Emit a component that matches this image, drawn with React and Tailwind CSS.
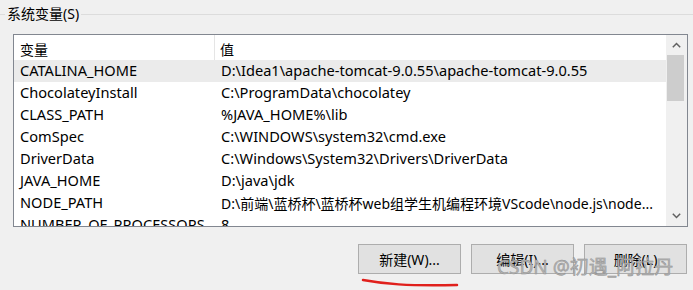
import React from "react";

const rows = [
  ["CATALINA_HOME", "D:\\Idea1\\apache-tomcat-9.0.55\\apache-tomcat-9.0.55", true],
  ["ChocolateyInstall", "C:\\ProgramData\\chocolatey"],
  ["CLASS_PATH", "%JAVA_HOME%\\lib"],
  ["ComSpec", "C:\\WINDOWS\\system32\\cmd.exe"],
  ["DriverData", "C:\\Windows\\System32\\Drivers\\DriverData"],
  ["JAVA_HOME", "D:\\java\\jdk"],
  ["NODE_PATH", "D:\\前端\\蓝桥杯\\蓝桥杯web组学生机编程环境VScode\\node.js\\node...", false, true],
  ["NUMBER_OF_PROCESSORS", "8"],
];

function Btn({ children }) {
  return (
    <div className="w-[103px] h-[30px] border border-[#adadad] bg-[#e1e1e1] flex items-center justify-center text-[14px] text-black">
      {children}
    </div>
  );
}

export default function App() {
  return (
    <div className="relative w-[693px] h-[290px] bg-[#f0f0f0] overflow-hidden text-black font-['Noto_Sans','Noto_Sans_CJK_SC',sans-serif]">
      {/* group title */}
      <div className="flex items-center h-[28px]">
        <div className="w-[5px] h-px bg-[#dcdcdc]" />
        <div className="px-[2px] text-[14px] leading-[28px]">系统变量(S)</div>
        <div className="flex-1 h-px bg-[#dcdcdc]" />
      </div>

      {/* list box */}
      <div className="ml-[13px] mt-[6px] w-[675px] h-[193px] border border-[#828790] bg-white flex overflow-hidden">
        <div className="flex-1 overflow-hidden">
          <div className="flex h-[25px] items-center text-[14px]">
            <div className="w-[201px] pl-[6px] pt-[3px] border-r border-[#e5e5e5] h-full flex items-center">变量</div>
            <div className="pl-[5px] pt-[3px]">值</div>
          </div>
          {rows.map(([k, v, sel, narrow]) => (
            <div
              key={k}
              className={`flex h-[22px] items-center text-[14.6px] whitespace-nowrap ${sel ? "bg-[#ebebeb]" : ""}`}
            >
              <div className="w-[202px] pl-[6px] shrink-0">{k}</div>
              <div className={narrow ? "pl-[5px] text-[14px]" : "pl-[5px]"}>{v}</div>
            </div>
          ))}
        </div>
        <div className="w-[21px] bg-[#f0f0f0] flex flex-col items-stretch">
          <div className="h-[20px] flex items-center justify-center">
            <svg width="9" height="6" viewBox="0 0 9 6">
              <path d="M0.8 5.2 L4.5 1.5 L8.2 5.2" stroke="#606060" strokeWidth="1.5" fill="none" />
            </svg>
          </div>
          <div className="ml-[1px] mr-[3px] h-[46px] bg-[#cdcdcd]" />
          <div className="flex-1" />
          <div className="h-[20px] flex items-center justify-center">
            <svg width="9" height="6" viewBox="0 0 9 6">
              <path d="M0.8 0.8 L4.5 4.5 L8.2 0.8" stroke="#606060" strokeWidth="1.5" fill="none" />
            </svg>
          </div>
        </div>
      </div>

      {/* buttons */}
      <div className="flex justify-end gap-[10px] pr-[6px] mt-[17px]">
        <Btn>新建(W)...</Btn>
        <Btn>编辑(I)...</Btn>
        <Btn>删除(L)</Btn>
      </div>

      {/* red annotation */}
      <svg className="absolute left-[360px] top-[276px]" width="100" height="14" viewBox="0 0 100 14">
        <path d="M3 4 C 25 8, 45 10, 97 9" stroke="#e0201c" strokeWidth="2.5" fill="none" strokeLinecap="round" />
      </svg>

      {/* watermark */}
      <div
        className="absolute left-[497px] top-[255px] text-[19px] leading-[24px] text-[#b4b4b4] whitespace-nowrap"
        style={{ WebkitTextStroke: "0.4px #8a8a8a" }}
      >
        CSDN @初遇_阿拉丹
      </div>
    </div>
  );
}
